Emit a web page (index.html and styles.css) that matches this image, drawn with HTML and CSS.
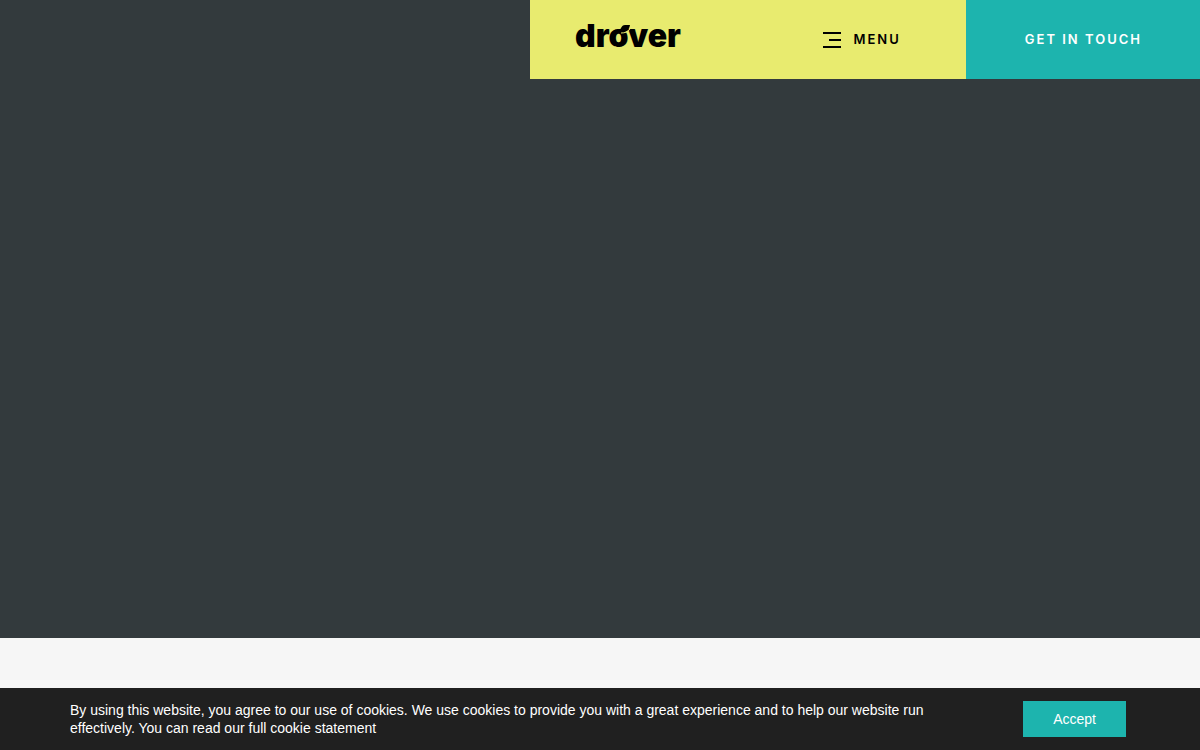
FILE: index.html
```html
<!DOCTYPE html>
<html lang="en">
<head>
    <meta charset="UTF-8">
    <meta name="viewport" content="width=device-width, initial-scale=1">
    <title>drover</title>
    <link rel="stylesheet" href="styles.css">
</head>
<body>
    <header class="header">
        <div class="header-main">
            <a class="logo" href="#" aria-label="drover">
                <svg width="108" height="32" viewBox="0 0 108 32" aria-hidden="true">
                    <text x="0" y="27">drover</text>
                    <path class="logo-cut" d="M46 13c4 0 7-1 9-4"/>
                    <path d="M41 12c2 0 4-2 5-4c1-2 2-3 4-3h5c-1 5-3 7-7 7z"/>
                </svg>
            </a>
            <button class="menu-button" type="button">
                <svg width="18" height="16" viewBox="0 0 18 16" aria-hidden="true">
                    <path d="M0 0h18v2H0zM6 7h12v2H6zM0 14h18v2H0z"/>
                </svg>
                Menu
            </button>
        </div>
        <a class="contact-link" href="#">Get in touch</a>
    </header>

    <main>
        <section class="hero"></section>
        <section class="intro"></section>
    </main>

    <div class="cookie-bar">
        <p>By using this website, you agree to our use of cookies. We use cookies to provide you with a great experience and to help our website run effectively. You can read our full cookie statement</p>
        <button class="accept-button" type="button">Accept</button>
    </div>
</body>
</html>
```
FILE: styles.css
```css
* { box-sizing: border-box; }
body { margin: 0; background: #f6f6f6; font-family: "Liberation Sans", Arial, sans-serif; }

.header { position: fixed; top: 0; right: 0; z-index: 10; display: flex; }
.header-main { display: flex; align-items: center; gap: 140px; padding: 0 65px 0 45px; background: #e8eb6f; }
.logo { display: block; margin-bottom: 8px; }
.logo svg { display: block; overflow: visible; }
.logo text { font-family: Inter, sans-serif; font-size: 32px; font-weight: 900; }
.logo-cut { fill: none; stroke: #e8eb6f; stroke-width: 1; }
.menu-button, .contact-link { font-family: Inter, sans-serif; font-size: 13px; font-weight: 600; line-height: 15px; letter-spacing: 2px; text-transform: uppercase; }
.menu-button { display: flex; align-items: center; gap: 12px; padding: 0; border: none; background: none; color: #000; cursor: pointer; }
.contact-link { padding: 32px 58px 32px 59px; background: #1db4ae; color: #fff; text-decoration: none; }

.hero { height: 85vh; background: #333a3d; }
.intro { min-height: 15vh; background: #f6f6f6; }

.cookie-bar { position: fixed; right: 0; bottom: 0; left: 0; display: flex; align-items: center; justify-content: space-between; gap: 80px; padding: 13px 74px 13px 70px; background: #202020; color: #fff; font-size: 14px; line-height: 18px; }
.cookie-bar p { flex: 1; max-width: 860px; margin: 0; }
.accept-button { padding: 9px 30px; border: none; background: #1db4ae; color: #fff; font-family: inherit; font-size: 14px; line-height: 18px; cursor: pointer; }
```
